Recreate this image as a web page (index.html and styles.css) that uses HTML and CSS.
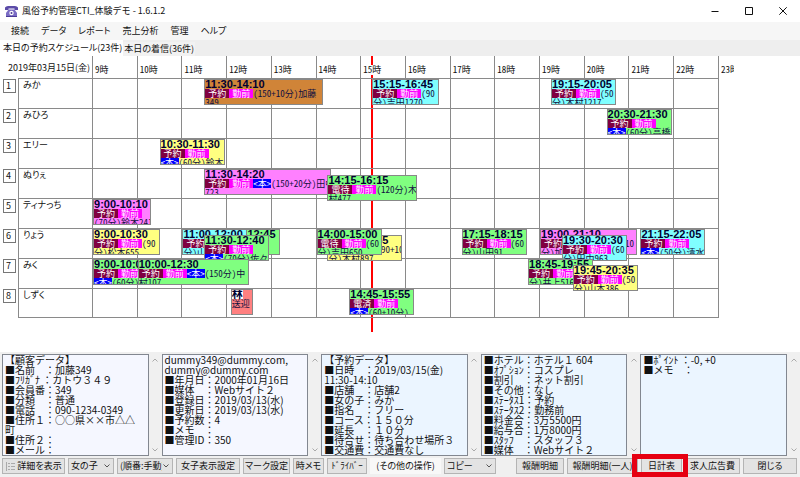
FILE: index.html
```html
<!DOCTYPE html>
<html lang="ja">
<head>
<meta charset="utf-8">
<meta name="viewport" content="width=device-width, initial-scale=1">
<title>風俗予約管理CTI_体験デモ - 1.6.1.2</title>
<link rel="stylesheet" href="styles.css">
</head>
<body>
<header class="titlebar">
  <svg class="app-icon" viewBox="0 0 13 11" aria-hidden="true">
    <path d="M0 1.500Q1 0 3 0h7q2 0 3 1.500V4H9.500V2.500h-6V4H0z" fill="#5b4ba8"/>
    <path d="M3.500 3.500h6L12 7v4H1V7z" fill="#7a6cc4"/>
    <circle cx="6.500" cy="7" r="2.200" fill="#fff"/>
    <circle cx="6.500" cy="7" r="1" fill="#4a3a96"/>
    <path d="M1 10h11v1H1z" fill="#4a3a96"/>
  </svg>
  <h1 class="app-title">風俗予約管理CTI_体験デモ - 1.6.1.2</h1>
  <div class="window-buttons">
    <button type="button" aria-label="最小化"><svg viewBox="0 0 8 8"><path d="M0.500 4.500h7"/></svg></button>
    <button type="button" aria-label="最大化"><svg viewBox="0 0 8 8"><path d="M0.500 0.500h7v7h-7z"/></svg></button>
    <button type="button" aria-label="ウィンドウを閉じる"><svg viewBox="0 0 8 8"><path d="M0.300 0.300l7.400 7.400M7.700 0.300L0.300 7.700"/></svg></button>
  </div>
</header>
<nav class="menubar">
  <button type="button">接続</button>
  <button type="button">データ</button>
  <button type="button">レポート</button>
  <button type="button">売上分析</button>
  <button type="button">管理</button>
  <button type="button">ヘルプ</button>
</nav>
<div class="tabs" role="tablist">
  <button type="button" class="tab active" role="tab" aria-selected="true">本日の予約スケジュール(23件)</button>
  <button type="button" class="tab" role="tab" aria-selected="false">本日の着信(36件)</button>
</div>

<main class="schedule">
  <div class="board">
    <div class="now"></div>
    <table class="timetable">
      <colgroup><col class="col-no"><col class="col-name"><col span="14"><col class="col-end"></colgroup>
      <thead>
        <tr>
          <th colspan="2" class="date">2019年03月15日(金)</th>
          <th><span>9時</span></th><th><span>10時</span></th><th><span>11時</span></th><th><span>12時</span></th><th><span>13時</span></th><th><span>14時</span></th><th><span>15時</span></th><th><span>16時</span></th><th><span>17時</span></th><th><span>18時</span></th><th><span>19時</span></th><th><span>20時</span></th><th><span>21時</span></th><th><span>22時</span></th><th><span class="cut">23時</span></th>
        </tr>
      </thead>
      <tbody>
        <tr>
          <td class="no"><span>1</span></td><th class="name">みか</th>
          <td></td><td></td>
          <td><div class="booking brown" style="--m:30;--d:160"><b>11:30-14:10</b><p><i class="state">予約</i><i class="work">勤前</i>(150+10分)加藤<br>349</p></div></td>
          <td></td><td></td><td></td>
          <td><div class="booking cyan" style="--m:15;--d:90"><b>15:15-16:45</b><p><i class="state">予約</i><i class="work">勤前</i>(90<br>分)吉田1270</p></div></td>
          <td></td><td></td><td></td>
          <td><div class="booking cyan" style="--m:15;--d:50"><b>19:15-20:05</b><p><i class="state">予約</i><i class="work">勤前</i>(50<br>分)木村1217</p></div></td>
          <td></td><td></td><td></td><td class="end"></td>
        </tr>
        <tr>
          <td class="no"><span>2</span></td><th class="name">みひろ</th>
          <td></td><td></td><td></td><td></td><td></td><td></td><td></td><td></td><td></td><td></td><td></td>
          <td><div class="booking green" style="--m:30;--d:60"><b>20:30-21:30</b><p><i class="state">予約</i><i class="work">勤前</i><br><i class="pick">&lt;本&gt;</i>(60分)高橋</p></div></td>
          <td></td><td></td><td class="end"></td>
        </tr>
        <tr>
          <td class="no"><span>3</span></td><th class="name">エリー</th>
          <td></td>
          <td><div class="booking yellow" style="--m:30;--d:60"><b>10:30-11:30</b><p><i class="state">予約</i><i class="work">勤前</i><br><i class="pick">&lt;本&gt;</i>(60分)鈴木</p></div></td>
          <td></td><td></td><td></td><td></td><td></td><td></td><td></td><td></td><td></td><td></td><td></td><td></td><td class="end"></td>
        </tr>
        <tr>
          <td class="no"><span>4</span></td><th class="name">ぬりぇ</th>
          <td></td><td></td>
          <td><div class="booking pink" style="--m:30;--d:170"><b>11:30-14:20</b><p><i class="state">予約</i><i class="work">勤前</i><i class="pick">&lt;本&gt;</i>(150+20分)田中<br>723</p></div></td>
          <td></td><td></td>
          <td><div class="booking green low" style="--m:15;--d:120"><b>14:15-16:15</b><p><i class="state">電待</i><i class="work">勤前</i>(120分)木<br>村477</p></div></td>
          <td></td><td></td><td></td><td></td><td></td><td></td><td></td><td></td><td class="end"></td>
        </tr>
        <tr>
          <td class="no"><span>5</span></td><th class="name">ティナっち</th>
          <td><div class="booking pink short" style="--m:0;--d:78"><b>9:00-10:10</b><p><i class="state">予約</i><i class="work">勤前</i><br>(70分)鈴木241</p></div></td>
          <td></td><td></td><td></td><td></td><td></td><td></td><td></td><td></td><td></td><td></td><td></td><td></td><td></td><td class="end"></td>
        </tr>
        <tr>
          <td class="no"><span>6</span></td><th class="name">りょう</th>
          <td><div class="booking yellow" style="--m:0;--d:90"><b>9:00-10:30</b><p><i class="state">予約</i><i class="work">勤前</i>(90<br>分)松本655</p></div></td>
          <td></td>
          <td>
            <div class="booking green" style="--m:45;--d:60"><b>11:45-12:45</b><p><i class="state">予約</i><i class="work">勤前</i></p></div>
            <div class="booking cyan" style="--m:0;--d:60"><b>11:00-12:00</b><p><i class="state">予約</i><i class="work">勤前</i>(60<br>分)山口</p></div>
            <div class="booking green low" style="--m:30;--d:70"><b>11:30-12:40</b><p><i class="state">予約</i><i class="work">勤前</i><br><i class="pick">&lt;本&gt;</i>(70分)佐々</p></div>
          </td>
          <td></td><td></td>
          <td>
            <div class="booking yellow low" style="--m:15;--d:100"><b>14:15-15:55</b><p><i class="state">予約</i><i class="work">勤前</i>(90+10<br>分)木村897</p></div>
            <div class="booking green" style="--m:0;--d:60"><b>14:00-15:00</b><p><i class="state">電待</i><i class="work">勤前</i>(60<br>分)吉田650</p></div>
          </td>
          <td></td><td></td>
          <td><div class="booking green" style="--m:15;--d:60"><b>17:15-18:15</b><p><i class="state">予約</i><i class="work">勤前</i>(60<br>分)山田91</p></div></td>
          <td></td>
          <td>
            <div class="booking pink" style="--m:0;--d:130"><b>19:00-21:10</b><p><i class="state">予約</i><i class="work">勤前</i><i class="pick">&lt;本&gt;</i>(90+10<br>分)加藤</p></div>
            <div class="booking cyan low" style="--m:30;--d:60"><b>19:30-20:30</b><p><i class="state">予約</i><i class="work">勤前</i>(60<br>分)田中963</p></div>
          </td>
          <td></td>
          <td><div class="booking cyan" style="--m:15;--d:50"><b>21:15-22:05</b><p><i class="state">予約</i><i class="work">勤前</i><br><i class="pick">&lt;本&gt;</i>(50分)清水</p></div></td>
          <td></td><td class="end"></td>
        </tr>
        <tr>
          <td class="no"><span>7</span></td><th class="name">みく</th>
          <td><div class="booking green" style="--m:0;--d:60"><b>9:00-10:00</b><p><i class="state">予約</i><i class="work">勤前</i><br><i class="pick">&lt;本&gt;</i>(60分)木</p></div></td>
          <td><div class="booking green" style="--m:0;--d:150"><b>10:00-12:30</b><p><i class="state">予約</i><i class="work">勤前</i><i class="pick">&lt;本&gt;</i>(150分)中<br>村107</p></div></td>
          <td></td><td></td><td></td><td></td><td></td><td></td><td></td>
          <td>
            <div class="booking green" style="--m:45;--d:60"><b>18:45-19:55</b><p><i class="state">予約</i><i class="work">勤前</i>(70<br>分)井上516</p></div>
          </td>
          <td><div class="booking yellow low" style="--m:45;--d:50"><b>19:45-20:35</b><p><i class="state">予約</i><i class="work">勤前</i>(50<br>分)山本386</p></div></td>
          <td></td><td></td><td></td><td class="end"></td>
        </tr>
        <tr>
          <td class="no"><span>8</span></td><th class="name">しずく</th>
          <td></td><td></td><td></td>
          <td><div class="booking red short" style="--m:5;--d:30"><b class="driver">林</b><p>送迎</p></div></td>
          <td></td>
          <td><div class="booking green" style="--m:45;--d:60"><b>14:45-15:55</b><p><i class="state">電済</i><i class="work">勤前</i><br><i class="pick">&lt;本&gt;</i>(60+10分)</p></div></td>
          <td></td><td></td><td></td><td></td><td></td><td></td><td></td><td></td><td class="end"></td>
        </tr>
      </tbody>
    </table>
  </div>
</main>

<section class="details">
  <div class="panel customer">
    <textarea readonly rows="10" aria-label="顧客データ">【顧客データ】
■名前　：加藤349
■ﾌﾘｶﾞﾅ ：カトウ３４９
■会員番：349
■分類　：普通
■電話　：090-1234-0349
■住所１：○○県××市△△町
■住所２：
■メール：</textarea>
    <div class="scroll"><svg viewBox="0 0 6 4"><path d="M0.500 3.500L3 1l2.500 2.500"/></svg><svg viewBox="0 0 6 4"><path d="M0.500 0.500L3 3l2.500-2.500"/></svg></div>
  </div>
  <div class="panel customer">
    <textarea readonly rows="10" aria-label="顧客の連絡先と履歴">dummy349@dummy.com,
dummy@dummy.com
■年月日：2000年01月16日
■媒体　：Webサイト２
■登録日：2019/03/13(水)
■更新日：2019/03/13(水)
■予約数：4
■メモ　：
■管理ID：350</textarea>
    <div class="scroll"><svg viewBox="0 0 6 4"><path d="M0.500 3.500L3 1l2.500 2.500"/></svg><svg viewBox="0 0 6 4"><path d="M0.500 0.500L3 3l2.500-2.500"/></svg></div>
  </div>
  <div class="panel reserve">
    <textarea readonly rows="10" aria-label="予約データ">【予約データ】
■日時　：2019/03/15(金)
11:30-14:10
■店舗　：店舗2
■女の子：みか
■指名　：フリー
■コース：１５０分
■延長　：１０分
■待合せ：待ち合わせ場所３
■交通費：交通費なし</textarea>
    <div class="scroll"><svg viewBox="0 0 6 4"><path d="M0.500 3.500L3 1l2.500 2.500"/></svg><svg viewBox="0 0 6 4"><path d="M0.500 0.500L3 3l2.500-2.500"/></svg></div>
  </div>
  <div class="panel reserve">
    <textarea readonly rows="10" aria-label="予約の内訳">■ホテル：ホテル１ 604
■ｵﾌﾟｼｮﾝ：コスプレ
■割引　：ネット割引
■その他：なし
■ｽﾃｰﾀｽ1：予約
■ｽﾃｰﾀｽ2：勤務前
■料金合：3万5500円
■給与合：1万8000円
■ｽﾀｯﾌ　：スタッフ３
■媒体　：Webサイト２</textarea>
    <div class="scroll"><svg viewBox="0 0 6 4"><path d="M0.500 3.500L3 1l2.500 2.500"/></svg><svg viewBox="0 0 6 4"><path d="M0.500 0.500L3 3l2.500-2.500"/></svg></div>
  </div>
  <div class="panel reserve">
    <textarea readonly rows="10" aria-label="ポイントとメモ">■ﾎﾟｲﾝﾄ ：-0, +0
■メモ　：</textarea>
    <div class="scroll"><svg viewBox="0 0 6 4"><path d="M0.500 3.500L3 1l2.500 2.500"/></svg><svg viewBox="0 0 6 4"><path d="M0.500 0.500L3 3l2.500-2.500"/></svg></div>
  </div>
</section>

<footer class="toolbar">
  <button type="button"><svg class="list-icon" viewBox="0 0 10 9" aria-hidden="true"><path d="M1.500 0v9M3 1.500h2M6 1.500h4M3 4.500h2M6 4.500h4M3 7.500h2M6 7.500h4"/></svg>詳細を表示</button>
  <div class="picker"><select aria-label="表示対象"><option>女の子</option></select><svg viewBox="0 0 6 4"><path d="M0.500 0.500L3 3l2.500-2.500"/></svg></div>
  <div class="picker"><select aria-label="並び順"><option>(順番:手動)</option></select><svg viewBox="0 0 6 4"><path d="M0.500 0.500L3 3l2.500-2.500"/></svg></div>
  <button type="button">女子表示設定</button>
  <button type="button">マーク設定</button>
  <button type="button">時メモ</button>
  <button type="button">ﾄﾞﾗｲﾊﾞｰ</button>
  <label class="other" for="other-action">(その他の操作)</label>
  <div class="picker"><select id="other-action"><option>コピー</option></select><svg viewBox="0 0 6 4"><path d="M0.500 0.500L3 3l2.500-2.500"/></svg></div>
  <span></span>
  <button type="button">報酬明細</button>
  <button type="button">報酬明細(一人)</button>
  <div class="highlight"><button type="button">日計表</button></div>
  <button type="button">求人広告費</button>
  <button type="button">閉じる</button>
</footer>
</body>
</html>
```
FILE: styles.css
```css
* {
  box-sizing: border-box;
}

body {
  margin: 0;
  min-height: 100vh;
  display: flex;
  flex-direction: column;
  background: #f0f0f0;
  color: #111;
  font-family: "Noto Sans CJK JP", sans-serif;
  font-size: 9px;
  line-height: 12px;
  overflow: hidden;
}

button,
select,
textarea {
  font: inherit;
  color: inherit;
  margin: 0;
}

svg {
  fill: none;
  stroke: currentColor;
}

/* Title bar and menus */
.titlebar {
  display: flex;
  align-items: center;
  height: 22px;
  padding-left: 5px;
  background: #fff;
}

.app-icon {
  width: 13px;
  height: 11px;
  stroke: none;
}

.app-title {
  margin: 0 0 0 4px;
  font-size: 9px;
  font-weight: 400;
}

.window-buttons {
  display: flex;
  margin-left: auto;
}

.window-buttons button {
  display: flex;
  align-items: center;
  justify-content: center;
  width: 34px;
  height: 20px;
  padding: 0;
  border: 0;
  background: none;
}

.window-buttons svg {
  width: 8px;
  height: 8px;
}

.menubar {
  display: flex;
  align-items: center;
  gap: 12px;
  height: 18px;
  padding-left: 11px;
  background: #f6f6f6;
}

.menubar button {
  padding: 0;
  border: 0;
  background: none;
  font-feature-settings: "palt";
}

.tabs {
  display: flex;
  align-items: flex-end;
  height: 16px;
  background: #eee;
}

.tab {
  height: 14px;
  padding: 0 1px;
  border: 0;
  background: #f2f2f2;
  font-feature-settings: "palt";
}

.tab.active {
  height: 16px;
  padding: 0 1px 0 3px;
  background: #fff;
}

/* Timetable */
.schedule {
  flex: 1;
  background: #fff;
}

.board {
  position: relative;
  height: 276px;
}

.now {
  position: absolute;
  top: 0;
  bottom: 0;
  left: calc(92px + (100% - 174px) * 6.25 / 14);
  width: 2px;
  background: #f00;
}

.timetable {
  width: 100%;
  table-layout: fixed;
  border-spacing: 0;
}

.col-no {
  width: 18px;
}

.col-name {
  width: 74px;
}

.col-end {
  width: 82px;
}

.timetable th,
.timetable td {
  padding: 0;
  font-weight: 400;
  text-align: left;
  vertical-align: top;
  border-left: 1px solid #8a8a8a;
}

.timetable thead th {
  height: 22px;
  vertical-align: bottom;
}

.timetable thead span {
  position: relative;
  z-index: 1;
  display: inline-block;
  margin-left: 2px;
  line-height: 10px;
  margin-bottom: 3px;
  background: #fff;
  font-feature-settings: "hwid";
}

.timetable thead .cut {
  width: 13px;
  overflow: hidden;
  white-space: nowrap;
  vertical-align: bottom;
}

.timetable thead .date {
  border-left: 0;
  padding: 0 2px 4px 0;
  text-align: right;
}

.timetable tbody th,
.timetable tbody td {
  position: relative;
  height: 30px;
  border-top: 1px solid #8a8a8a;
}

.timetable tbody tr:last-child th,
.timetable tbody tr:last-child td {
  border-bottom: 1px solid #8a8a8a;
}

.timetable tbody tr .name {
  padding: 0 0 0 4px;
  font-feature-settings: "palt";
}

.timetable tbody tr .no,
.timetable tbody tr:last-child .no {
  border: 0;
  padding: 1px 2px 0 3px;
}

.no span {
  display: block;
  height: 14px;
  padding-left: 2px;
  border: 1px solid #777;
  line-height: 11px;
}

.timetable tbody tr .end,
.timetable tbody tr:last-child .end {
  border-width: 0 0 0 1px;
}

.booking {
  position: absolute;
  z-index: 1;
  top: 0;
  left: calc(var(--m) * 100% / 60);
  width: calc(var(--d) * (100% + 1px) / 60);
  min-width: 65px;
  height: 26px;
  overflow: hidden;
  border: 1px solid #888;
  line-height: 9px;
  white-space: nowrap;
  color: #101040;
  font-feature-settings: "hwid";
}

.booking.low {
  top: 6px;
}

.booking.short {
  min-width: 22px;
}

.booking b {
  display: block;
  font: bold 11px/9px "Liberation Sans", "Noto Sans CJK JP", sans-serif;
  color: #000030;
}

.booking .driver {
  width: 11px;
  background: #fff;
}

.booking p {
  margin: 0;
}

.booking i {
  display: inline-block;
  height: 9px;
  font-style: normal;
  color: #fff;
  vertical-align: top;
}

.state {
  padding: 0 3px;
  background: #800040;
}

.work {
  padding: 0 3px;
  background: #f0f;
}

.pick {
  background: #00f;
}

.brown { background: #d08438; }
.cyan { background: #80ffff; }
.green { background: #80ff80; }
.yellow { background: #ffff80; }
.pink { background: #ff80ff; }
.red { background: #ff8080; }

/* Detail panels */
.details {
  display: grid;
  grid-template-columns: repeat(5, 1fr);
  padding: 2px 0 0 2px;
}

.panel {
  display: flex;
}

.panel textarea {
  flex: 1;
  min-width: 0;
  padding: 0 5px 0 2px;
  border: 1px solid #828790;
  resize: none;
  overflow: hidden;
  font-size: 10px;
  line-height: 10px;
}

.customer textarea {
  background: #f5f7ff;
}

.reserve textarea {
  background: #ebf5ff;
}

.scroll {
  display: flex;
  flex-direction: column;
  align-items: center;
  justify-content: space-between;
  width: 13px;
  padding: 4px 0;
  color: #aaa;
}

.scroll svg {
  width: 6px;
  height: 4px;
}

/* Bottom toolbar */
.toolbar {
  display: grid;
  grid-template-columns:
    minmax(0, 63fr) minmax(0, 46fr) minmax(0, 56fr) minmax(0, 64fr) minmax(0, 47fr)
    minmax(0, 31fr) minmax(0, 40fr) minmax(0, 71fr) minmax(0, 52fr) minmax(0, 14fr)
    minmax(0, 48fr) minmax(0, 71fr) minmax(0, 41fr) minmax(0, 55fr) minmax(0, 54fr);
  gap: 3px;
  padding: 2px 3px 3px 2px;
  font-feature-settings: "palt";
}

.toolbar button,
.toolbar select {
  display: flex;
  align-items: center;
  justify-content: center;
  width: 100%;
  height: 16px;
  padding: 0;
  border: 1px solid #b4b4b4;
  border-radius: 0;
  background: #e3e3e3;
  font-feature-settings: "palt";
  white-space: nowrap;
}

.list-icon {
  width: 10px;
  height: 9px;
  margin-right: 2px;
  color: #aaa;
}

.picker {
  position: relative;
}

.toolbar select {
  appearance: none;
  padding: 0 10px 0 2px;
}

.picker svg {
  position: absolute;
  top: 6px;
  right: 4px;
  width: 6px;
  height: 4px;
  color: #555;
  pointer-events: none;
}

.other {
  background: #f8f8f8;
  line-height: 16px;
  text-align: center;
  white-space: nowrap;
}

.highlight {
  position: relative;
}

.highlight::after {
  content: "";
  position: absolute;
  inset: -4px -6px -3px -9px;
  border: 5px solid #e60012;
  pointer-events: none;
}
```
